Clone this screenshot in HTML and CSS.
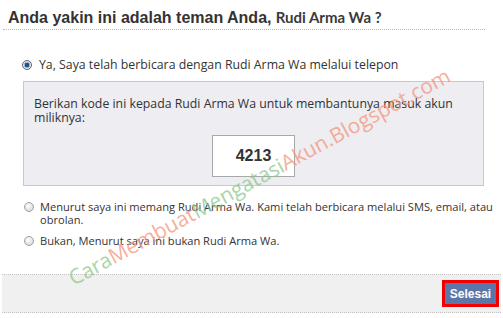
FILE: index.html
```html
<!DOCTYPE html>
<html>
<head>
<meta charset="utf-8">
<link rel="stylesheet" href="styles.css">
</head>
<body>
<div class="dialog">
  <div class="title"><span class="t1">Anda yakin ini adalah teman Anda,</span> <span class="t2">Rudi Arma Wa ?</span></div>
  <div class="body">
    <div class="option first">
      <span class="radio checked"></span>
      <span class="label">Ya, Saya telah berbicara dengan Rudi Arma Wa melalui telepon</span>
    </div>
    <div class="codebox">
      <p class="codetext">Berikan kode ini kepada Rudi Arma Wa untuk membantunya masuk akun miliknya:</p>
      <div class="code">4213</div>
    </div>
    <div class="option second">
      <span class="radio"></span>
      <span class="label">Menurut saya ini memang Rudi Arma Wa. Kami telah berbicara melalui SMS, email, atau obrolan.</span>
    </div>
    <div class="option third">
      <span class="radio"></span>
      <span class="label">Bukan, Menurut saya ini bukan Rudi Arma Wa.</span>
    </div>
  </div>
  <div class="footer">
    <div class="btnwrap"><button class="btn">Selesai</button></div>
  </div>
  <div class="watermark"><span class="g">Cara</span><span class="r">Membuat</span><span class="g">Mengatasi</span><span class="r">Akun.Blogspot.com</span></div>
</div>
</body>
</html>
```
FILE: styles.css
```css
html, body { margin: 0; padding: 0; background: #fff; }
body { font-family: "Open Sans", "Noto Sans", sans-serif; color: #333; }
.dialog { position: relative; width: 503px; height: 318px; overflow: hidden; }
.title {
  margin: 0 18px 0 3px;
  padding: 6px 0 0 5px;
  height: 23px;
  border-bottom: 1px dotted #b8b8b8;
  white-space: nowrap;
}
.t1 { font-family: "Liberation Sans", Arial, sans-serif; font-weight: bold; font-size: 16px; color: #333; }
.t2 { font-family: Lato, sans-serif; font-weight: bold; font-size: 15px; color: #3a3a3a; }
.body { height: 244px; }
.option { display: flex; align-items: flex-start; font-size: 12.3px; line-height: 13px; }
.option .radio { flex: none; width: 8px; height: 8px; border-radius: 50%; border: 1px solid #a0a0a0; background: radial-gradient(circle at 40% 35%, #fff, #cfcfcf); margin-top: 2px; }
.option .radio.checked { border-color: #666; background: radial-gradient(circle, #1f4f88 0 2px, #9bb8d8 2.5px 3px, #e8e8e8 3.5px); }
.first { padding: 28px 0 0 22px; }
.first .label { margin-left: 7px; }
.second { padding: 14px 4px 0 24px; font-size: 11.1px; }
.second .label { margin-left: 6px; }
.third { padding: 8px 0 0 24px; font-size: 11.1px; }
.third .label { margin-left: 6px; }
.codebox {
  margin: 10px 19px 0 23px;
  height: 105px;
  background: #ededf2;
  border: 1px solid #c8c8c8;
  padding: 0 10px;
  box-sizing: border-box;
}
.codetext { margin: 0; padding-top: 15px; font-size: 12.3px; line-height: 14px; }
.code {
  width: 83px; height: 42px; box-sizing: border-box;
  margin: 10px 0 0 178px;
  border: 1px solid #a8a8a8; background: #fff;
  display: flex; align-items: center; justify-content: center;
  font-family: "Liberation Sans", Arial, sans-serif; font-weight: bold; font-size: 16px; color: #333;
}
.footer {
  margin: 0 2px;
  height: 37px;
  background: #f0f0f0;
  border-top: 1px dotted #c4c4c4;
  border-bottom: 1px dotted #c4c4c4;
  display: flex; justify-content: flex-end; align-items: flex-start;
}
.btnwrap { margin: 5px 2px 0 0; border: 3px solid #f20000; display: flex; }
.btn {
  width: 51px; height: 21px; border: none; margin: 0; padding: 0;
  background: #5c76aa; color: #fff;
  font-family: "Liberation Sans", Arial, sans-serif; font-weight: bold; font-size: 12px;
}
.watermark {
  position: absolute; left: 70px; top: 268px;
  transform: rotate(-28.5deg); transform-origin: 0 50%;
  font-family: "Open Sans", sans-serif; font-size: 21px; line-height: 22px; white-space: nowrap;
  opacity: 0.75;
}
.watermark .g { color: #8cc88a; }
.watermark .r { color: #f4957a; }
```
